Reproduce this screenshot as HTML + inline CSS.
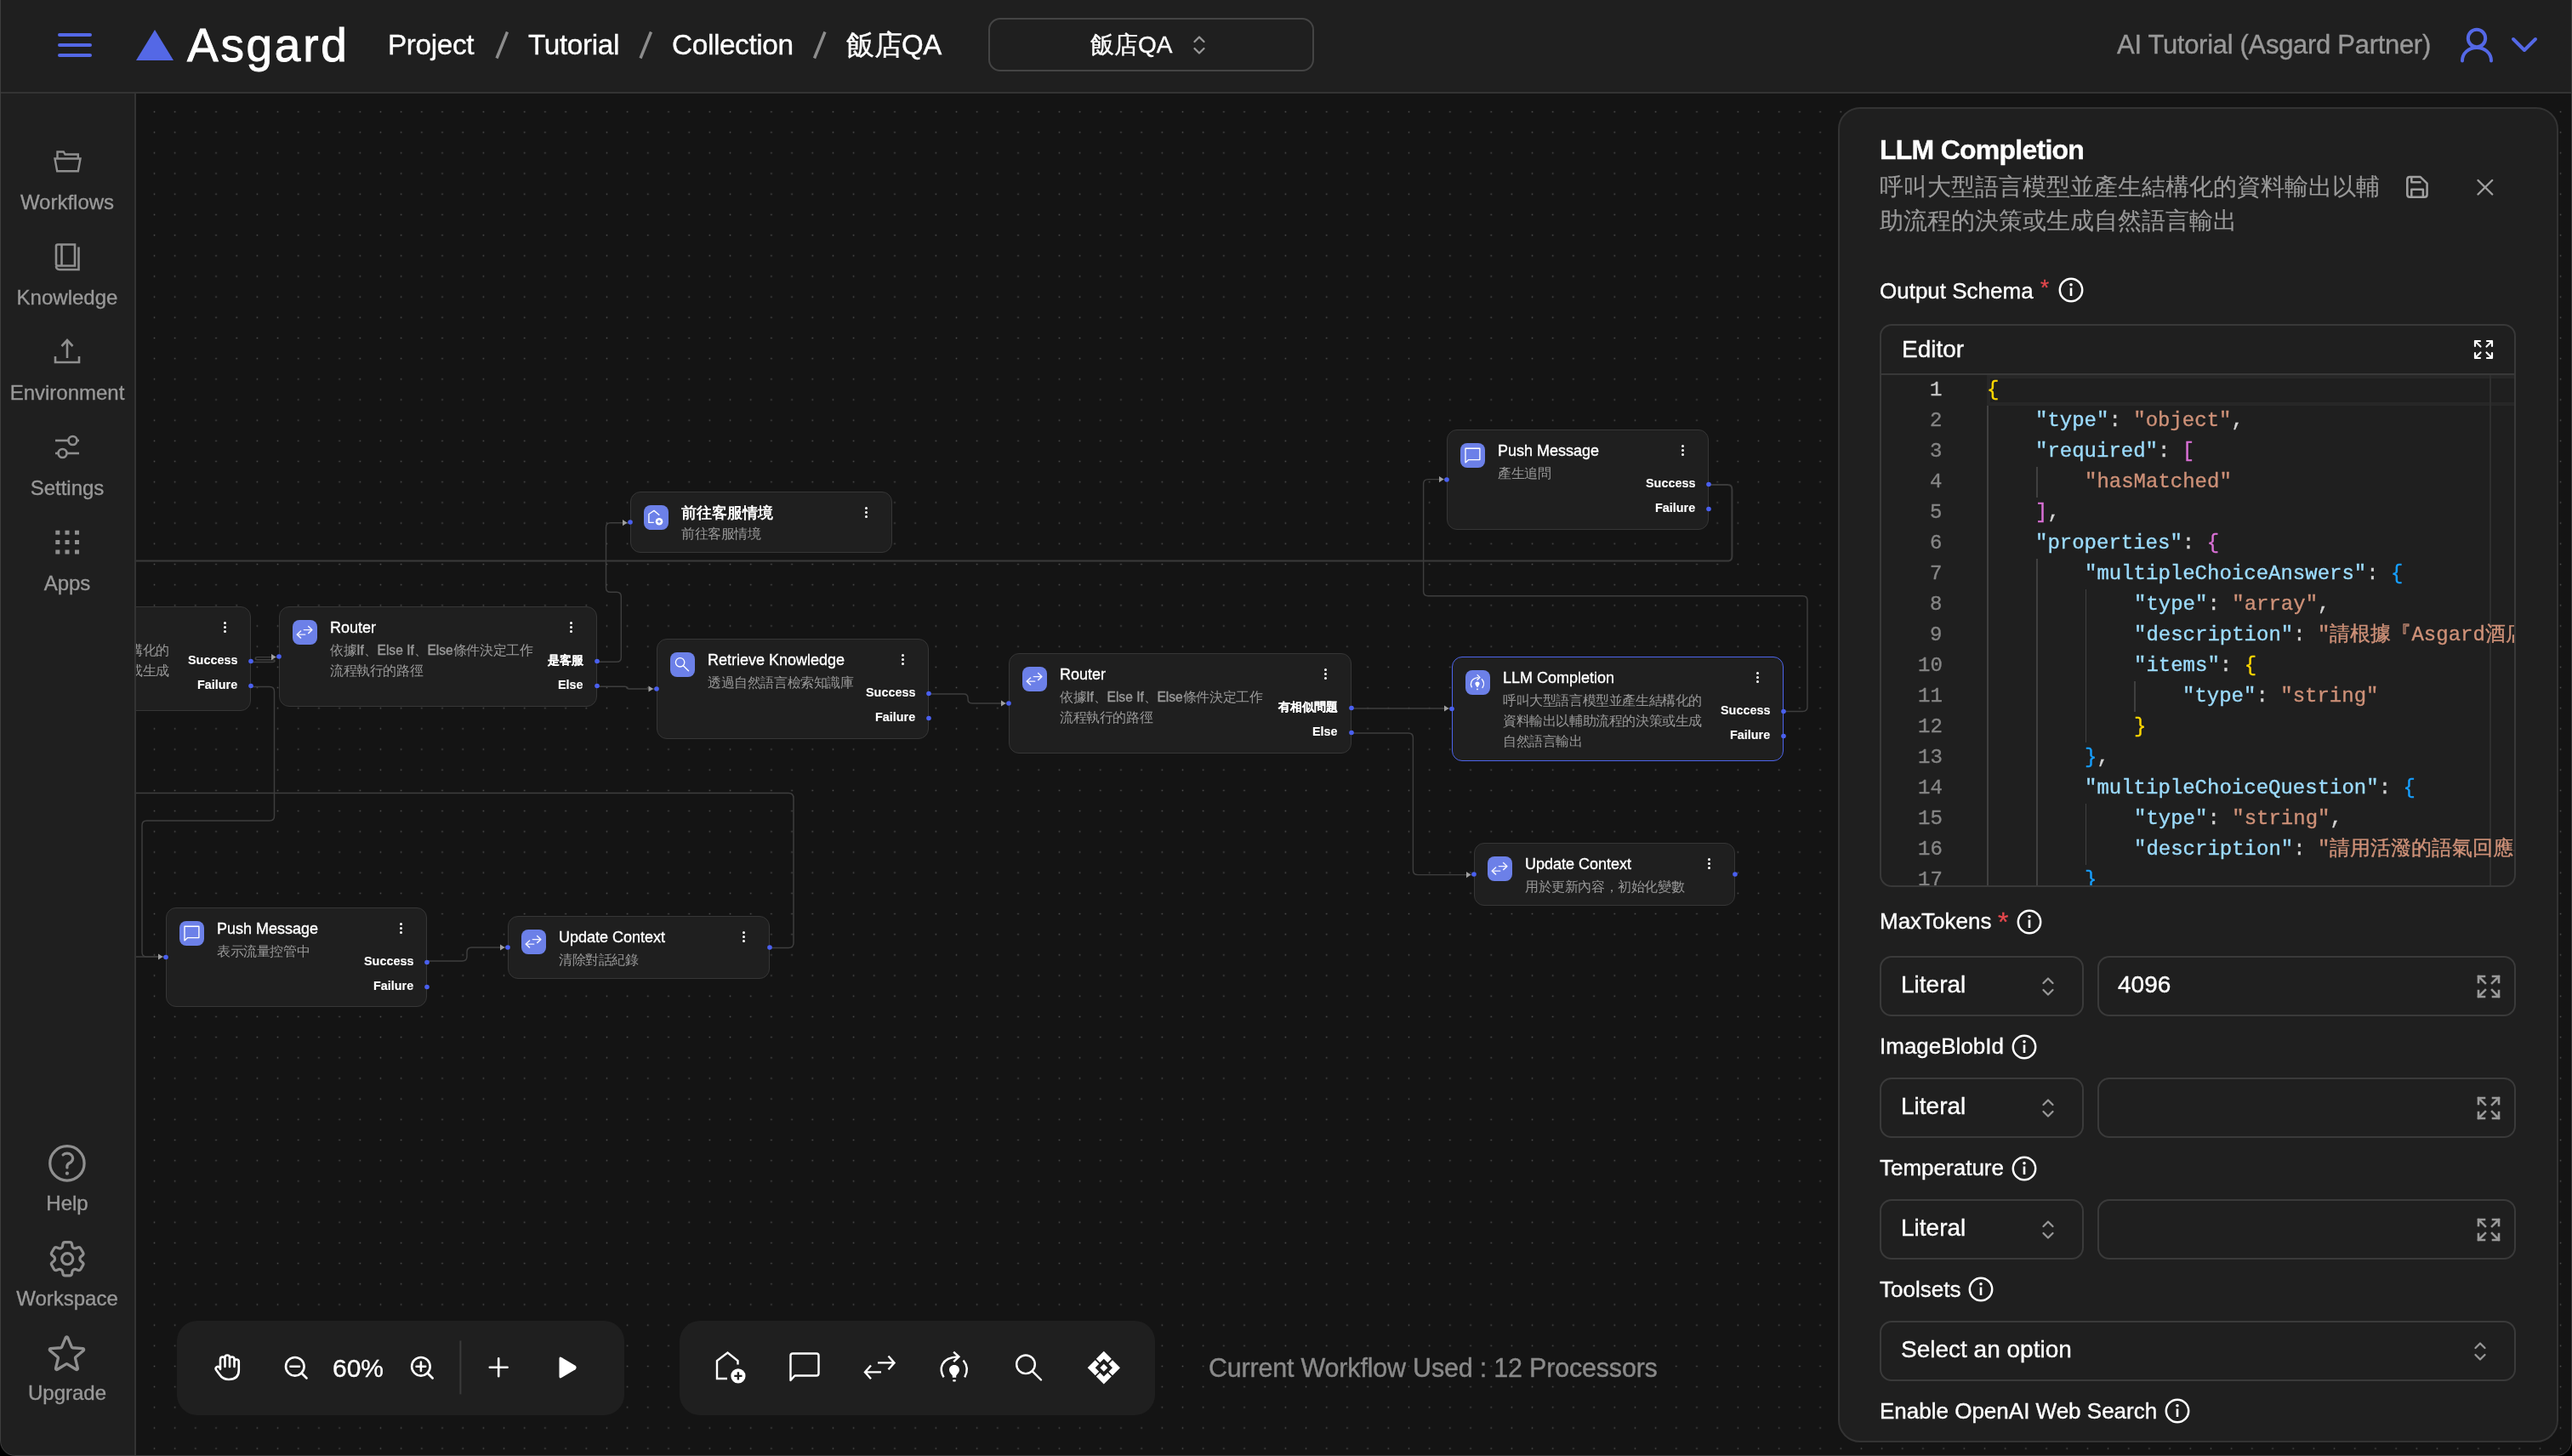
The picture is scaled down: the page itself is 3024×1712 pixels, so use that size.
<!DOCTYPE html>
<html><head><meta charset="utf-8">
<style>
*{box-sizing:border-box;margin:0;padding:0}
html,body{width:3024px;height:1712px;overflow:hidden;background:#000}
body{font-family:"Liberation Sans",sans-serif;color:#fff;position:relative;-webkit-text-stroke:0.35px currentColor}
.abs{position:absolute}
#win{position:absolute;left:0;top:0;width:3024px;height:1712px;background:#141414;border-radius:0 0 18px 18px;overflow:hidden}
#frame{position:absolute;left:0;top:-20px;width:3024px;height:1732px;border:1px solid #3d3d3d;border-radius:0 0 18px 18px;pointer-events:none}
#hdr{position:absolute;left:0;top:0;width:3024px;height:110px;background:#1f1f1f;border-bottom:2px solid #333}
#side{position:absolute;left:0;top:110px;width:160px;height:1602px;background:#1f1f1f;border-right:2px solid #333}
.t{position:absolute;white-space:nowrap;line-height:1}
.navlbl{position:absolute;left:0;width:158px;text-align:center;font-size:24px;color:#999;line-height:1;white-space:nowrap}
.node{position:absolute;background:#1f1f1f;border:1.2px solid #333;border-radius:12px}
.nic{position:absolute;width:29px;height:29px;border-radius:8px;background:#6c80e8}
.nic svg{position:absolute;left:0;top:0}
.ntitle{position:absolute;font-size:18px;color:#fff;white-space:nowrap;line-height:1}
.nsub{position:absolute;font-size:15.6px;color:#999;white-space:nowrap;line-height:24px}
.c{letter-spacing:-0.4px;-webkit-text-stroke:0}
.cj{-webkit-text-stroke:0.1px currentColor}
.nlab{position:absolute;font-size:14.4px;font-weight:bold;color:#fff;white-space:nowrap;line-height:1;-webkit-text-stroke:0.1px #fff}
.menu{position:absolute;width:4px}
.menu i{display:block;width:3.8px;height:3.8px;border-radius:2px;background:#fff;margin-bottom:1.3px}
.tb{position:absolute;top:1553px;height:111px;background:#1f1f1f;border-radius:24px}
#panel{position:absolute;left:2161px;top:126px;width:847px;height:1570px;background:#1f1f1f;border:2px solid #333;border-radius:26px}
.plbl{position:absolute;font-size:26px;color:#fff;white-space:nowrap;line-height:1}
.box{position:absolute;border:2px solid #3a3a3a;border-radius:14px}
.t,.navlbl,.ntitle,.nsub,.nlab,.plbl,.cj,.code{will-change:transform}
</style></head><body>
<div id="win">
  <svg class="abs" style="left:0;top:0" width="3024" height="1712">
    <defs>
      <pattern id="dots" patternUnits="userSpaceOnUse" x="169.41" y="119.41" width="24.18" height="24.18">
        <rect x="11.34" y="11.34" width="1.5" height="1.5" fill="#505050"/>
      </pattern>
    </defs>
    <rect x="160" y="110" width="2864" height="1602" fill="url(#dots)"/>
  </svg>

<svg class="abs" style="left:0;top:0" width="3024" height="1712">
<g fill="none" stroke="#3e3e3e" stroke-width="1.45">
<path d="M295,807.5 H317 Q322.5,807.5 322.5,813 V959.5 Q322.5,965 317,965 H172.5 Q167,965 167,970.5 V1119.5 Q167,1125 172.5,1125 H195"/>
<path d="M160,1125 H195"/>
<path d="M905,1114.5 H927 Q933,1114.5 933,1108.5 V938.5 Q933,932.5 927,932.5 H160"/>
<path d="M502,1130 H543.5 Q549,1130 549,1124.5 V1119.5 Q549,1114 554.5,1114 H597"/>
<path d="M295,778.5 H320.5 Q323,778.5 323,777.1 Q323,775.7 320.5,775.7 H302.5 Q300.3,775.7 300.3,774.2 Q300.3,772.6 302.5,772.6 H328"/>
<path d="M702.7,778.2 H725 Q730.3,778.2 730.3,772.9 V701.6 Q730.3,696.3 725,696.3 H717.8 Q712.5,696.3 712.5,691 V620 Q712.5,614.7 717.8,614.7 H741"/>
<path d="M702.7,807.2 H734.5 Q737,807.2 737,808.6 Q737,810 739.5,810 H771.5"/>
<path d="M1092,816 H1133 Q1138,816 1138,821 V822 Q1138,827 1143,827 H1186"/>
<path d="M1589,833 H1707"/>
<path d="M1589,862 H1656 Q1661.4,862 1661.4,867.5 V1023 Q1661.4,1028.6 1667,1028.6 H1733"/>
<path d="M2097,836.4 H2119.5 Q2125,836.4 2125,831 V706.2 Q2125,700.7 2119.5,700.7 H1679.1 Q1673.6,700.7 1673.6,695.2 V569.1 Q1673.6,563.6 1679.1,563.6 H1701"/>
<path d="M2009,570 H2031 Q2036.4,570 2036.4,575.5 V654.2 Q2036.4,659.6 2031,659.6 H160" stroke-width="2" stroke="#3a3a3a"/>
</g>
<polygon points="186,1121.4 191.5,1125 186,1128.6" fill="#a0a0a0"/>
<polygon points="588,1110.4 593.5,1114 588,1117.6" fill="#a0a0a0"/>
<polygon points="319,769.0 324.5,772.6 319,776.2" fill="#a0a0a0"/>
<polygon points="732,611.1 737.5,614.7 732,618.3000000000001" fill="#a0a0a0"/>
<polygon points="762.5,806.4 768.0,810 762.5,813.6" fill="#a0a0a0"/>
<polygon points="1177,823.4 1182.5,827 1177,830.6" fill="#a0a0a0"/>
<polygon points="1698,829.4 1703.5,833 1698,836.6" fill="#a0a0a0"/>
<polygon points="1724,1025.0 1729.5,1028.6 1724,1032.1999999999998" fill="#a0a0a0"/>
<polygon points="1692,560.0 1697.5,563.6 1692,567.2" fill="#a0a0a0"/>
</svg>
<div class="node" style="left:-95px;top:713px;width:390px;height:123px;border:1.2px solid #363636"></div>
<div class="nic" style="left:-79.5px;top:728.5px"><svg width="29" height="29" viewBox="0 0 29 29"><g fill="none" stroke="#fff" stroke-width="1.3" stroke-linecap="round" stroke-linejoin="round"><path d="M7.3,19.9 C5.5,16.5 5.8,10 14.8,8.7"/><path d="M14,5.6 L17,8.6 L14,11.3"/><path d="M19.3,10.8 C21.8,13.5 22.3,17.5 20,20.5"/></g><path d="M14,13.4 C15.6,13.4 16.6,14.6 16.6,15.8 C16.6,17.2 15.2,18.2 14.6,19.9 H13.4 C12.8,18.2 11.4,17.2 11.4,15.8 C11.4,14.6 12.4,13.4 14,13.4 Z" fill="#fff"/><circle cx="14" cy="22.4" r="0.9" fill="#fff"/></svg></div>
<div class="ntitle" style="left:-35.5px;top:728.8px;">LLM Completion</div>
<div class="nsub" style="left:-35.5px;top:752.5px"><span class="c">呼叫大型語言模型並產生結構化的</span><br><span class="c">資料輸出以輔助流程的決策或生成</span><br><span class="c">自然語言輸出</span></div>
<div class="menu" style="left:262.7px;top:730.5px"><i></i><i></i><i></i></div>
<div class="nlab" style="right:2745px;top:769.0px">Success</div>
<div class="nlab" style="right:2745px;top:798.0px">Failure</div>
<svg class="abs" style="left:0;top:0;overflow:visible" width="1" height="1"><circle cx="-95" cy="774.5" r="2.8" fill="#4a60f0"/><circle cx="295" cy="777.5" r="2.8" fill="#4a60f0"/><circle cx="295" cy="806.5" r="2.8" fill="#4a60f0"/></svg>
<div class="node" style="left:328px;top:713px;width:374px;height:118px;border:1.2px solid #363636"></div>
<div class="nic" style="left:343.5px;top:728.5px"><svg width="29" height="29" viewBox="0 0 29 29"><g fill="none" stroke="#f2f2ff" stroke-width="1.45" stroke-linecap="round" stroke-linejoin="round"><path d="M13.3,11.6 H22.6"/><path d="M18.6,7.5 L22.8,11.6 L18.6,15.6"/><path d="M5.4,17.1 H14.8"/><path d="M9.6,12.9 L5.3,17.1 L9.6,21.1"/></g></svg></div>
<div class="ntitle" style="left:387.5px;top:728.8px;">Router</div>
<div class="nsub" style="left:387.5px;top:752.5px"><span class="c">依據</span>If<span class="c">、</span>Else If<span class="c">、</span>Else<span class="c">條件決定工作</span><br><span class="c">流程執行的路徑</span></div>
<div class="menu" style="left:669.7px;top:730.5px"><i></i><i></i><i></i></div>
<div class="nlab" style="right:2338px;top:769.0px">是客服</div>
<div class="nlab" style="right:2338px;top:798.0px">Else</div>
<svg class="abs" style="left:0;top:0;overflow:visible" width="1" height="1"><circle cx="328" cy="772.0" r="2.8" fill="#4a60f0"/><circle cx="702" cy="777.5" r="2.8" fill="#4a60f0"/><circle cx="702" cy="806.5" r="2.8" fill="#4a60f0"/></svg>
<div class="node" style="left:741px;top:578px;width:308px;height:72px;border:1.2px solid #363636"></div>
<div class="nic" style="left:756.5px;top:593.5px"><svg width="29" height="29" viewBox="0 0 29 29"><g fill="none" stroke="#fff" stroke-width="1.35" stroke-linejoin="miter"><path d="M11.8,20.4 H5.9 V10.5 L12,6.4 L18.3,11.7"/></g><circle cx="18" cy="19.2" r="4.3" fill="#fff"/><path d="M18,17.2 V21.2 M16,19.2 H20" stroke="#6c80e8" stroke-width="1.2"/></svg></div>
<div class="ntitle" style="left:800.5px;top:593.8px;font-weight:bold;-webkit-text-stroke:0;">前往客服情境</div>
<div class="nsub" style="left:800.5px;top:615.7px"><span class="c">前往客服情境</span></div>
<div class="menu" style="left:1016.7px;top:595.5px"><i></i><i></i><i></i></div>
<svg class="abs" style="left:0;top:0;overflow:visible" width="1" height="1"><circle cx="741" cy="614.0" r="2.8" fill="#4a60f0"/></svg>
<div class="node" style="left:772px;top:751px;width:320px;height:118px;border:1.2px solid #363636"></div>
<div class="nic" style="left:787.5px;top:766.5px"><svg width="29" height="29" viewBox="0 0 29 29"><g fill="none" stroke="#fff" stroke-width="1.35" stroke-linecap="round"><circle cx="11.6" cy="11.8" r="5.2"/><path d="M15.6,16 L21.5,21.8"/></g></svg></div>
<div class="ntitle" style="left:831.5px;top:766.8px;">Retrieve Knowledge</div>
<div class="nsub" style="left:831.5px;top:790.5px"><span class="c">透過自然語言檢索知識庫</span></div>
<div class="menu" style="left:1059.7px;top:768.5px"><i></i><i></i><i></i></div>
<div class="nlab" style="right:1948px;top:807.0px">Success</div>
<div class="nlab" style="right:1948px;top:836.0px">Failure</div>
<svg class="abs" style="left:0;top:0;overflow:visible" width="1" height="1"><circle cx="772" cy="810.0" r="2.8" fill="#4a60f0"/><circle cx="1092" cy="815.5" r="2.8" fill="#4a60f0"/><circle cx="1092" cy="844.5" r="2.8" fill="#4a60f0"/></svg>
<div class="node" style="left:1186px;top:768px;width:403px;height:118px;border:1.2px solid #363636"></div>
<div class="nic" style="left:1201.5px;top:783.5px"><svg width="29" height="29" viewBox="0 0 29 29"><g fill="none" stroke="#f2f2ff" stroke-width="1.45" stroke-linecap="round" stroke-linejoin="round"><path d="M13.3,11.6 H22.6"/><path d="M18.6,7.5 L22.8,11.6 L18.6,15.6"/><path d="M5.4,17.1 H14.8"/><path d="M9.6,12.9 L5.3,17.1 L9.6,21.1"/></g></svg></div>
<div class="ntitle" style="left:1245.5px;top:783.8px;">Router</div>
<div class="nsub" style="left:1245.5px;top:807.5px"><span class="c">依據</span>If<span class="c">、</span>Else If<span class="c">、</span>Else<span class="c">條件決定工作</span><br><span class="c">流程執行的路徑</span></div>
<div class="menu" style="left:1556.7px;top:785.5px"><i></i><i></i><i></i></div>
<div class="nlab" style="right:1451px;top:824.0px">有相似問題</div>
<div class="nlab" style="right:1451px;top:853.0px">Else</div>
<svg class="abs" style="left:0;top:0;overflow:visible" width="1" height="1"><circle cx="1186" cy="827.0" r="2.8" fill="#4a60f0"/><circle cx="1589" cy="832.5" r="2.8" fill="#4a60f0"/><circle cx="1589" cy="861.5" r="2.8" fill="#4a60f0"/></svg>
<div class="node" style="left:1701px;top:505px;width:308px;height:118px;border:1.2px solid #363636"></div>
<div class="nic" style="left:1716.5px;top:520.5px"><svg width="29" height="29" viewBox="0 0 29 29"><path d="M6,6.2 H22.9 V19.6 H9.6 L6,22.9 Z" fill="none" stroke="#fff" stroke-width="1.35" stroke-linejoin="round"/></svg></div>
<div class="ntitle" style="left:1760.5px;top:520.8px;">Push Message</div>
<div class="nsub" style="left:1760.5px;top:544.5px"><span class="c">產生追問</span></div>
<div class="menu" style="left:1976.7px;top:522.5px"><i></i><i></i><i></i></div>
<div class="nlab" style="right:1031px;top:561.0px">Success</div>
<div class="nlab" style="right:1031px;top:590.0px">Failure</div>
<svg class="abs" style="left:0;top:0;overflow:visible" width="1" height="1"><circle cx="1701" cy="564.0" r="2.8" fill="#4a60f0"/><circle cx="2009" cy="569.5" r="2.8" fill="#4a60f0"/><circle cx="2009" cy="598.5" r="2.8" fill="#4a60f0"/></svg>
<div class="node" style="left:1707px;top:772px;width:390px;height:123px;border:1.8px solid #4d65ec"></div>
<div class="nic" style="left:1722.5px;top:787.5px"><svg width="29" height="29" viewBox="0 0 29 29"><g fill="none" stroke="#fff" stroke-width="1.3" stroke-linecap="round" stroke-linejoin="round"><path d="M7.3,19.9 C5.5,16.5 5.8,10 14.8,8.7"/><path d="M14,5.6 L17,8.6 L14,11.3"/><path d="M19.3,10.8 C21.8,13.5 22.3,17.5 20,20.5"/></g><path d="M14,13.4 C15.6,13.4 16.6,14.6 16.6,15.8 C16.6,17.2 15.2,18.2 14.6,19.9 H13.4 C12.8,18.2 11.4,17.2 11.4,15.8 C11.4,14.6 12.4,13.4 14,13.4 Z" fill="#fff"/><circle cx="14" cy="22.4" r="0.9" fill="#fff"/></svg></div>
<div class="ntitle" style="left:1766.5px;top:787.8px;">LLM Completion</div>
<div class="nsub" style="left:1766.5px;top:811.5px"><span class="c">呼叫大型語言模型並產生結構化的</span><br><span class="c">資料輸出以輔助流程的決策或生成</span><br><span class="c">自然語言輸出</span></div>
<div class="menu" style="left:2064.7px;top:789.5px"><i></i><i></i><i></i></div>
<div class="nlab" style="right:943px;top:828.0px">Success</div>
<div class="nlab" style="right:943px;top:857.0px">Failure</div>
<svg class="abs" style="left:0;top:0;overflow:visible" width="1" height="1"><circle cx="1707" cy="833.5" r="2.8" fill="#4a60f0"/><circle cx="2097" cy="836.5" r="2.8" fill="#4a60f0"/><circle cx="2097" cy="865.5" r="2.8" fill="#4a60f0"/></svg>
<div class="node" style="left:1733px;top:991px;width:307px;height:74px;border:1.2px solid #363636"></div>
<div class="nic" style="left:1748.5px;top:1006.5px"><svg width="29" height="29" viewBox="0 0 29 29"><g fill="none" stroke="#f2f2ff" stroke-width="1.45" stroke-linecap="round" stroke-linejoin="round"><path d="M13.3,11.6 H22.6"/><path d="M18.6,7.5 L22.8,11.6 L18.6,15.6"/><path d="M5.4,17.1 H14.8"/><path d="M9.6,12.9 L5.3,17.1 L9.6,21.1"/></g></svg></div>
<div class="ntitle" style="left:1792.5px;top:1006.8px;">Update Context</div>
<div class="nsub" style="left:1792.5px;top:1030.5px"><span class="c">用於更新內容，初始化變數</span></div>
<div class="menu" style="left:2007.7px;top:1008.5px"><i></i><i></i><i></i></div>
<svg class="abs" style="left:0;top:0;overflow:visible" width="1" height="1"><circle cx="1733" cy="1028.0" r="2.8" fill="#4a60f0"/><circle cx="2040" cy="1028.0" r="2.8" fill="#4a60f0"/></svg>
<div class="node" style="left:195px;top:1067px;width:307px;height:117px;border:1.2px solid #363636"></div>
<div class="nic" style="left:210.5px;top:1082.5px"><svg width="29" height="29" viewBox="0 0 29 29"><path d="M6,6.2 H22.9 V19.6 H9.6 L6,22.9 Z" fill="none" stroke="#fff" stroke-width="1.35" stroke-linejoin="round"/></svg></div>
<div class="ntitle" style="left:254.5px;top:1082.8px;">Push Message</div>
<div class="nsub" style="left:254.5px;top:1106.5px"><span class="c">表示流量控管中</span></div>
<div class="menu" style="left:469.7px;top:1084.5px"><i></i><i></i><i></i></div>
<div class="nlab" style="right:2538px;top:1123.0px">Success</div>
<div class="nlab" style="right:2538px;top:1152.0px">Failure</div>
<svg class="abs" style="left:0;top:0;overflow:visible" width="1" height="1"><circle cx="195" cy="1125.5" r="2.8" fill="#4a60f0"/><circle cx="502" cy="1131.5" r="2.8" fill="#4a60f0"/><circle cx="502" cy="1160.5" r="2.8" fill="#4a60f0"/></svg>
<div class="node" style="left:597px;top:1077px;width:308px;height:74px;border:1.2px solid #363636"></div>
<div class="nic" style="left:612.5px;top:1092.5px"><svg width="29" height="29" viewBox="0 0 29 29"><g fill="none" stroke="#f2f2ff" stroke-width="1.45" stroke-linecap="round" stroke-linejoin="round"><path d="M13.3,11.6 H22.6"/><path d="M18.6,7.5 L22.8,11.6 L18.6,15.6"/><path d="M5.4,17.1 H14.8"/><path d="M9.6,12.9 L5.3,17.1 L9.6,21.1"/></g></svg></div>
<div class="ntitle" style="left:656.5px;top:1092.8px;">Update Context</div>
<div class="nsub" style="left:656.5px;top:1116.5px"><span class="c">清除對話紀錄</span></div>
<div class="menu" style="left:872.7px;top:1094.5px"><i></i><i></i><i></i></div>
<svg class="abs" style="left:0;top:0;overflow:visible" width="1" height="1"><circle cx="597" cy="1114.0" r="2.8" fill="#4a60f0"/><circle cx="905" cy="1114.0" r="2.8" fill="#4a60f0"/></svg>
  <!-- TOOLBARS -->
  <div class="tb" style="left:208px;width:526px"></div>
  <svg class="abs" style="left:208px;top:1553px" width="526" height="111" viewBox="208 1553 526 111">
    <g fill="none" stroke="#fff" stroke-width="2.6" stroke-linecap="round" stroke-linejoin="round">
      <path d="M259,1610 V1598.5 Q259,1595.5 261.8,1595.5 Q264.5,1595.5 264.5,1598.5 V1607 M264.5,1598 V1596 Q264.5,1593.5 267.2,1593.5 Q270,1593.5 270,1596 V1607 M270,1598 Q270,1595.5 272.7,1595.5 Q275.5,1595.5 275.5,1598 V1607 M275.5,1601 Q275.5,1598.5 278,1598.5 Q280.8,1598.5 280.8,1601 V1611 Q280.8,1622 269,1622 Q262,1622 258,1616 L254,1610.5 Q252.8,1608.5 254.8,1607.3 Q256.8,1606.2 258.5,1608.3 L259,1609"/>
      <circle cx="346.8" cy="1606.8" r="10.8"/><path d="M354.5,1614.5 L360.5,1620.5"/><path d="M341.5,1606.8 H352"/>
      <circle cx="494.9" cy="1606.8" r="10.8"/><path d="M502.6,1614.5 L508.6,1620.5"/><path d="M489.6,1606.8 H500.2 M494.9,1601.5 V1612"/>
      <path d="M575.8,1607.8 H596.6 M586.2,1597.3 V1618.3"/>
    </g>
    <path d="M657.5,1597.5 Q657.5,1594.5 660.5,1596.2 L676.5,1605.8 Q678.8,1608 676.5,1610.2 L660.5,1619.8 Q657.5,1621.5 657.5,1618.5 Z" fill="#fff"/>
    <rect x="540.4" y="1576.4" width="2" height="63" fill="#3a3a3a"/>
  </svg>
  <div class="t" style="left:391px;top:1593.6px;font-size:30px;color:#fff">60%</div>

  <div class="tb" style="left:799px;width:559px"></div>
  <svg class="abs" style="left:799px;top:1553px" width="559" height="111" viewBox="799 1553 559 111">
    <g fill="none" stroke="#fff" stroke-width="2.4" stroke-linecap="round" stroke-linejoin="miter">
      <path d="M855,1621 H843 V1600 L855.5,1590.5 L867.5,1600 V1604.5" stroke-linecap="butt"/>
      <path d="M932,1591.5 H960 Q962.5,1591.5 962.5,1594 V1615 Q962.5,1617.5 960,1617.5 H934.5 L929.5,1623 V1594 Q929.5,1591.5 932,1591.5 Z" stroke-linejoin="round"/>
      <path d="M1032,1602.4 H1050.5 M1044.5,1594.5 L1051.5,1602.4 L1044.5,1610.2" stroke-linecap="butt"/>
      <path d="M1036,1613.4 H1017.5 M1024,1605.5 L1017,1613.4 L1024,1621.3" stroke-linecap="butt"/>
      <path d="M1109.6,1619.3 C1104,1610 1105.5,1596.5 1126.5,1595.3" stroke-linecap="butt"/>
      <path d="M1121.2,1589.6 L1127.4,1595.3 L1121.2,1601.2" stroke-linecap="butt"/>
      <path d="M1132.6,1599.6 C1137.8,1606 1137.8,1613 1134.2,1619.3" stroke-linecap="butt"/>
      <circle cx="1206" cy="1604.3" r="10.8"/><path d="M1213.8,1612.3 L1224,1622.5"/>
    </g>
    <circle cx="867.9" cy="1617.9" r="8.6" fill="#fff"/>
    <path d="M867.9,1613.3 V1622.5 M863.3,1617.9 H872.5" stroke="#1f1f1f" stroke-width="2.4"/>
    <path d="M1122,1604.9 C1125.5,1604.9 1128,1607.5 1128,1610.8 C1128,1613.5 1126,1615 1124.2,1617.5 V1619.7 H1119.8 V1617.5 C1118,1615 1116,1613.5 1116,1610.8 C1116,1607.5 1118.5,1604.9 1122,1604.9 Z" fill="#fff"/>
    <rect x="1120.2" y="1622.2" width="3.6" height="2.4" rx="0.8" fill="#fff"/>
    <g fill="#fff">
      <path d="M1297.8,1588.7 L1306.8,1597.7 L1302.3,1602.2 L1297.8,1597.7 L1293.3,1602.2 L1288.8,1597.7 Z"/>
      <path d="M1297.8,1627.6 L1306.8,1618.6 L1302.3,1614.1 L1297.8,1618.6 L1293.3,1614.1 L1288.8,1618.6 Z"/>
      <path d="M1278.7,1608.2 L1287.7,1599.2 L1292.2,1603.7 L1287.7,1608.2 L1292.2,1612.7 L1287.7,1617.2 Z"/>
      <path d="M1317,1608.2 L1308,1599.2 L1303.5,1603.7 L1308,1608.2 L1303.5,1612.7 L1308,1617.2 Z"/>
      <path d="M1297.8,1603.7 L1302.3,1608.2 L1297.8,1612.7 L1293.3,1608.2 Z"/>
    </g>
  </svg>
  <div class="t" style="left:1420.5px;top:1592.9px;font-size:30.5px;letter-spacing:-0.2px;color:#8a8a8a">Current Workflow Used : 12 Processors</div>

  <!-- RIGHT PANEL -->
  <div id="panel"></div>
  <div class="t" style="left:2210px;top:159.6px;font-size:32px;letter-spacing:-0.75px;font-weight:bold;color:#fff">LLM Completion</div>
  <div class="abs cj" style="left:2210px;top:200px;font-size:28px;line-height:39.5px;color:#999;white-space:nowrap">呼叫大型語言模型並產生結構化的資料輸出以輔<br>助流程的決策或生成自然語言輸出</div>
  <svg class="abs" style="left:2824px;top:204px" width="36" height="32" viewBox="0 0 36 32"><g fill="none" stroke="#a0a0a0" stroke-width="2.5" stroke-linejoin="round"><path d="M9.3,4.1 H21.8 L29.6,11.6 V24.7 Q29.6,27.7 26.6,27.7 H9.3 Q6.3,27.7 6.3,24.7 V7.1 Q6.3,4.1 9.3,4.1 Z"/><path d="M11.3,4.1 V10.2 H22.5"/><path d="M11.3,27.7 V18.8 H24.9 V27.7"/></g></svg>
  <svg class="abs" style="left:2906px;top:205px" width="31" height="31" viewBox="0 0 31 31"><g stroke="#a0a0a0" stroke-width="2.4" stroke-linecap="round"><line x1="7.5" y1="7" x2="24.2" y2="23.5"/><line x1="24.2" y1="7" x2="7.5" y2="23.5"/></g></svg>

  <div class="plbl" style="left:2210px;top:328.6px">Output Schema</div>
  <div class="t" style="left:2399px;top:325px;font-size:26px;color:#e5484d">*</div>
  <svg class="abs" style="left:2418px;top:324px" width="34" height="34" viewBox="0 0 34 34"><circle cx="17" cy="17" r="13.2" fill="none" stroke="#fff" stroke-width="2.5"/><circle cx="17" cy="10.8" r="1.8" fill="#fff"/><rect x="15.7" y="14.5" width="2.6" height="9.5" fill="#fff"/></svg>

  <div class="box" style="left:2210px;top:381px;width:748px;height:662px;border-color:#383838"></div>
  <div class="abs" style="left:2212px;top:439px;width:744px;height:2px;background:#383838"></div>
  <div class="t" style="left:2236px;top:396.7px;font-size:28px;color:#fff">Editor</div>
  <svg class="abs" style="left:2906px;top:397px" width="28" height="28" viewBox="0 0 28 28"><g fill="none" stroke="#fff" stroke-width="2.2" stroke-linecap="round" stroke-linejoin="round"><path d="M4,10 V4 H10 M4,4 L10.5,10.5"/><path d="M18,4 H24 V10 M24,4 L17.5,10.5"/><path d="M4,18 V24 H10 M4,24 L10.5,17.5"/><path d="M18,24 H24 V18 M24,24 L17.5,17.5"/></g></svg>
<div class="abs" style="left:2212px;top:441px;width:744px;height:600px;overflow:hidden;border-radius:0 0 12px 12px">
<div class="abs" style="left:124px;top:0.4px;width:624px;height:35.3px;border:4px solid #272727;border-right:none"></div>
<div class="abs" style="left:124.4px;top:35.5px;width:1.5px;height:576px;background:#404040"></div>
<div class="abs" style="left:182.0px;top:107.5px;width:1.5px;height:36px;background:#404040"></div>
<div class="abs" style="left:182.0px;top:215.5px;width:1.5px;height:396px;background:#404040"></div>
<div class="abs" style="left:239.6px;top:251.5px;width:1.5px;height:180px;background:#404040"></div>
<div class="abs" style="left:239.6px;top:503.5px;width:1.5px;height:72px;background:#404040"></div>
<div class="abs" style="left:297.2px;top:359.5px;width:1.5px;height:36px;background:#404040"></div>
<div class="abs" style="left:715px;top:0;width:1.5px;height:600px;background:#2e2e2e"></div>
<div class="abs code" style="right:672.5px;top:-0.5px;height:36px;line-height:36px;font-family:'Liberation Mono',monospace;font-size:24px;color:#c6c6c6;text-align:right">1</div>
<div class="abs code" style="left:123.8px;top:-0.5px;height:36px;line-height:36px;font-family:'Liberation Mono',monospace;font-size:24px;white-space:pre"><span style="color:#ffd700">{</span></div>
<div class="abs code" style="right:672.5px;top:35.5px;height:36px;line-height:36px;font-family:'Liberation Mono',monospace;font-size:24px;color:#858585;text-align:right">2</div>
<div class="abs code" style="left:181.4px;top:35.5px;height:36px;line-height:36px;font-family:'Liberation Mono',monospace;font-size:24px;white-space:pre"><span style="color:#9cdcfe">"type"</span><span style="color:#d4d4d4">: </span><span style="color:#ce9178">"object"</span><span style="color:#d4d4d4">,</span></div>
<div class="abs code" style="right:672.5px;top:71.5px;height:36px;line-height:36px;font-family:'Liberation Mono',monospace;font-size:24px;color:#858585;text-align:right">3</div>
<div class="abs code" style="left:181.4px;top:71.5px;height:36px;line-height:36px;font-family:'Liberation Mono',monospace;font-size:24px;white-space:pre"><span style="color:#9cdcfe">"required"</span><span style="color:#d4d4d4">: </span><span style="color:#da70d6">[</span></div>
<div class="abs code" style="right:672.5px;top:107.5px;height:36px;line-height:36px;font-family:'Liberation Mono',monospace;font-size:24px;color:#858585;text-align:right">4</div>
<div class="abs code" style="left:239.0px;top:107.5px;height:36px;line-height:36px;font-family:'Liberation Mono',monospace;font-size:24px;white-space:pre"><span style="color:#ce9178">"hasMatched"</span></div>
<div class="abs code" style="right:672.5px;top:143.5px;height:36px;line-height:36px;font-family:'Liberation Mono',monospace;font-size:24px;color:#858585;text-align:right">5</div>
<div class="abs code" style="left:181.4px;top:143.5px;height:36px;line-height:36px;font-family:'Liberation Mono',monospace;font-size:24px;white-space:pre"><span style="color:#da70d6">]</span><span style="color:#d4d4d4">,</span></div>
<div class="abs code" style="right:672.5px;top:179.5px;height:36px;line-height:36px;font-family:'Liberation Mono',monospace;font-size:24px;color:#858585;text-align:right">6</div>
<div class="abs code" style="left:181.4px;top:179.5px;height:36px;line-height:36px;font-family:'Liberation Mono',monospace;font-size:24px;white-space:pre"><span style="color:#9cdcfe">"properties"</span><span style="color:#d4d4d4">: </span><span style="color:#da70d6">{</span></div>
<div class="abs code" style="right:672.5px;top:215.5px;height:36px;line-height:36px;font-family:'Liberation Mono',monospace;font-size:24px;color:#858585;text-align:right">7</div>
<div class="abs code" style="left:239.0px;top:215.5px;height:36px;line-height:36px;font-family:'Liberation Mono',monospace;font-size:24px;white-space:pre"><span style="color:#9cdcfe">"multipleChoiceAnswers"</span><span style="color:#d4d4d4">: </span><span style="color:#179fff">{</span></div>
<div class="abs code" style="right:672.5px;top:251.5px;height:36px;line-height:36px;font-family:'Liberation Mono',monospace;font-size:24px;color:#858585;text-align:right">8</div>
<div class="abs code" style="left:296.6px;top:251.5px;height:36px;line-height:36px;font-family:'Liberation Mono',monospace;font-size:24px;white-space:pre"><span style="color:#9cdcfe">"type"</span><span style="color:#d4d4d4">: </span><span style="color:#ce9178">"array"</span><span style="color:#d4d4d4">,</span></div>
<div class="abs code" style="right:672.5px;top:287.5px;height:36px;line-height:36px;font-family:'Liberation Mono',monospace;font-size:24px;color:#858585;text-align:right">9</div>
<div class="abs code" style="left:296.6px;top:287.5px;height:36px;line-height:36px;font-family:'Liberation Mono',monospace;font-size:24px;white-space:pre"><span style="color:#9cdcfe">"description"</span><span style="color:#d4d4d4">: </span><span style="color:#ce9178">"請根據『Asgard酒店的資料</span></div>
<div class="abs code" style="right:672.5px;top:323.5px;height:36px;line-height:36px;font-family:'Liberation Mono',monospace;font-size:24px;color:#858585;text-align:right">10</div>
<div class="abs code" style="left:296.6px;top:323.5px;height:36px;line-height:36px;font-family:'Liberation Mono',monospace;font-size:24px;white-space:pre"><span style="color:#9cdcfe">"items"</span><span style="color:#d4d4d4">: </span><span style="color:#ffd700">{</span></div>
<div class="abs code" style="right:672.5px;top:359.5px;height:36px;line-height:36px;font-family:'Liberation Mono',monospace;font-size:24px;color:#858585;text-align:right">11</div>
<div class="abs code" style="left:354.2px;top:359.5px;height:36px;line-height:36px;font-family:'Liberation Mono',monospace;font-size:24px;white-space:pre"><span style="color:#9cdcfe">"type"</span><span style="color:#d4d4d4">: </span><span style="color:#ce9178">"string"</span></div>
<div class="abs code" style="right:672.5px;top:395.5px;height:36px;line-height:36px;font-family:'Liberation Mono',monospace;font-size:24px;color:#858585;text-align:right">12</div>
<div class="abs code" style="left:296.6px;top:395.5px;height:36px;line-height:36px;font-family:'Liberation Mono',monospace;font-size:24px;white-space:pre"><span style="color:#ffd700">}</span></div>
<div class="abs code" style="right:672.5px;top:431.5px;height:36px;line-height:36px;font-family:'Liberation Mono',monospace;font-size:24px;color:#858585;text-align:right">13</div>
<div class="abs code" style="left:239.0px;top:431.5px;height:36px;line-height:36px;font-family:'Liberation Mono',monospace;font-size:24px;white-space:pre"><span style="color:#179fff">}</span><span style="color:#d4d4d4">,</span></div>
<div class="abs code" style="right:672.5px;top:467.5px;height:36px;line-height:36px;font-family:'Liberation Mono',monospace;font-size:24px;color:#858585;text-align:right">14</div>
<div class="abs code" style="left:239.0px;top:467.5px;height:36px;line-height:36px;font-family:'Liberation Mono',monospace;font-size:24px;white-space:pre"><span style="color:#9cdcfe">"multipleChoiceQuestion"</span><span style="color:#d4d4d4">: </span><span style="color:#179fff">{</span></div>
<div class="abs code" style="right:672.5px;top:503.5px;height:36px;line-height:36px;font-family:'Liberation Mono',monospace;font-size:24px;color:#858585;text-align:right">15</div>
<div class="abs code" style="left:296.6px;top:503.5px;height:36px;line-height:36px;font-family:'Liberation Mono',monospace;font-size:24px;white-space:pre"><span style="color:#9cdcfe">"type"</span><span style="color:#d4d4d4">: </span><span style="color:#ce9178">"string"</span><span style="color:#d4d4d4">,</span></div>
<div class="abs code" style="right:672.5px;top:539.5px;height:36px;line-height:36px;font-family:'Liberation Mono',monospace;font-size:24px;color:#858585;text-align:right">16</div>
<div class="abs code" style="left:296.6px;top:539.5px;height:36px;line-height:36px;font-family:'Liberation Mono',monospace;font-size:24px;white-space:pre"><span style="color:#9cdcfe">"description"</span><span style="color:#d4d4d4">: </span><span style="color:#ce9178">"請用活潑的語氣回應客人</span></div>
<div class="abs code" style="right:672.5px;top:575.5px;height:36px;line-height:36px;font-family:'Liberation Mono',monospace;font-size:24px;color:#858585;text-align:right">17</div>
<div class="abs code" style="left:239.0px;top:575.5px;height:36px;line-height:36px;font-family:'Liberation Mono',monospace;font-size:24px;white-space:pre"><span style="color:#179fff">}</span></div>
</div>
<div class="plbl" style="left:2210px;top:1070.0px">MaxTokens</div>
<div class="t" style="left:2349px;top:1067.5px;font-size:32px;color:#e5484d">*</div>
<svg class="abs" style="left:2369px;top:1066.5px" width="34" height="34" viewBox="0 0 34 34"><circle cx="17" cy="17" r="13.2" fill="none" stroke="#fff" stroke-width="2.5"/><circle cx="17" cy="10.8" r="1.8" fill="#fff"/><rect x="15.7" y="14.5" width="2.6" height="9.5" fill="#fff"/></svg>
<div class="box" style="left:2210px;top:1123.5px;width:240px;height:71px"></div>
<div class="t" style="left:2235px;top:1144.1px;font-size:28px;color:#fff">Literal</div>
<svg class="abs" style="left:2400px;top:1149.0px" width="16" height="22" viewBox="0 0 16 22"><g fill="none" stroke="#999" stroke-width="2.2" stroke-linecap="round" stroke-linejoin="round"><polyline points="2.5,7 8,1.5 13.5,7"/><polyline points="2.5,15 8,20.5 13.5,15"/></g></svg>
<div class="box" style="left:2466px;top:1123.5px;width:492px;height:71px"></div>
<div class="t" style="left:2490px;top:1144.1px;font-size:28px;color:#fff">4096</div>
<svg class="abs" style="left:2911px;top:1145.0px" width="30" height="30" viewBox="0 0 30 30"><g fill="none" stroke="#999" stroke-width="2.6" stroke-linecap="square"><path d="M3,10 V3 H10 M3,3 L11,11"/><path d="M20,3 H27 V10 M27,3 L19,11"/><path d="M3,20 V27 H10 M3,27 L11,19"/><path d="M20,27 H27 V20 M27,27 L19,19"/></g></svg>
<div class="plbl" style="left:2210px;top:1217.0px">ImageBlobId</div>
<svg class="abs" style="left:2363px;top:1213.5px" width="34" height="34" viewBox="0 0 34 34"><circle cx="17" cy="17" r="13.2" fill="none" stroke="#fff" stroke-width="2.5"/><circle cx="17" cy="10.8" r="1.8" fill="#fff"/><rect x="15.7" y="14.5" width="2.6" height="9.5" fill="#fff"/></svg>
<div class="box" style="left:2210px;top:1266.7px;width:240px;height:71px"></div>
<div class="t" style="left:2235px;top:1287.3px;font-size:28px;color:#fff">Literal</div>
<svg class="abs" style="left:2400px;top:1292.2px" width="16" height="22" viewBox="0 0 16 22"><g fill="none" stroke="#999" stroke-width="2.2" stroke-linecap="round" stroke-linejoin="round"><polyline points="2.5,7 8,1.5 13.5,7"/><polyline points="2.5,15 8,20.5 13.5,15"/></g></svg>
<div class="box" style="left:2466px;top:1266.7px;width:492px;height:71px"></div>
<svg class="abs" style="left:2911px;top:1288.2px" width="30" height="30" viewBox="0 0 30 30"><g fill="none" stroke="#999" stroke-width="2.6" stroke-linecap="square"><path d="M3,10 V3 H10 M3,3 L11,11"/><path d="M20,3 H27 V10 M27,3 L19,11"/><path d="M3,20 V27 H10 M3,27 L11,19"/><path d="M20,27 H27 V20 M27,27 L19,19"/></g></svg>
<div class="plbl" style="left:2210px;top:1360.0px">Temperature</div>
<svg class="abs" style="left:2363px;top:1356.5px" width="34" height="34" viewBox="0 0 34 34"><circle cx="17" cy="17" r="13.2" fill="none" stroke="#fff" stroke-width="2.5"/><circle cx="17" cy="10.8" r="1.8" fill="#fff"/><rect x="15.7" y="14.5" width="2.6" height="9.5" fill="#fff"/></svg>
<div class="box" style="left:2210px;top:1409.8px;width:240px;height:71px"></div>
<div class="t" style="left:2235px;top:1430.4px;font-size:28px;color:#fff">Literal</div>
<svg class="abs" style="left:2400px;top:1435.3px" width="16" height="22" viewBox="0 0 16 22"><g fill="none" stroke="#999" stroke-width="2.2" stroke-linecap="round" stroke-linejoin="round"><polyline points="2.5,7 8,1.5 13.5,7"/><polyline points="2.5,15 8,20.5 13.5,15"/></g></svg>
<div class="box" style="left:2466px;top:1409.8px;width:492px;height:71px"></div>
<svg class="abs" style="left:2911px;top:1431.3px" width="30" height="30" viewBox="0 0 30 30"><g fill="none" stroke="#999" stroke-width="2.6" stroke-linecap="square"><path d="M3,10 V3 H10 M3,3 L11,11"/><path d="M20,3 H27 V10 M27,3 L19,11"/><path d="M3,20 V27 H10 M3,27 L11,19"/><path d="M20,27 H27 V20 M27,27 L19,19"/></g></svg>
<div class="plbl" style="left:2210px;top:1502.6px">Toolsets</div>
<svg class="abs" style="left:2312px;top:1499.1px" width="34" height="34" viewBox="0 0 34 34"><circle cx="17" cy="17" r="13.2" fill="none" stroke="#fff" stroke-width="2.5"/><circle cx="17" cy="10.8" r="1.8" fill="#fff"/><rect x="15.7" y="14.5" width="2.6" height="9.5" fill="#fff"/></svg>
<div class="box" style="left:2210px;top:1552.7px;width:748px;height:71px"></div>
<div class="t" style="left:2235px;top:1573.3px;font-size:28px;color:#fff">Select an option</div>
<svg class="abs" style="left:2908px;top:1578px" width="16" height="22" viewBox="0 0 16 22"><g fill="none" stroke="#999" stroke-width="2.2" stroke-linecap="round" stroke-linejoin="round"><polyline points="2.5,7 8,1.5 13.5,7"/><polyline points="2.5,15 8,20.5 13.5,15"/></g></svg>
<div class="plbl" style="left:2210px;top:1645.7px">Enable OpenAI Web Search</div>
<svg class="abs" style="left:2543px;top:1642.2px" width="34" height="34" viewBox="0 0 34 34"><circle cx="17" cy="17" r="13.2" fill="none" stroke="#fff" stroke-width="2.5"/><circle cx="17" cy="10.8" r="1.8" fill="#fff"/><rect x="15.7" y="14.5" width="2.6" height="9.5" fill="#fff"/></svg>
  <!-- HEADER -->
  <div id="hdr">
    <svg class="abs" style="left:66px;top:37px" width="44" height="32" viewBox="0 0 44 32">
      <g stroke="#5468e6" stroke-width="4" stroke-linecap="round"><line x1="4" y1="4" x2="40" y2="4"/><line x1="4" y1="16" x2="40" y2="16"/><line x1="4" y1="28" x2="40" y2="28"/></g>
    </svg>
    <svg class="abs" style="left:160px;top:35px" width="44" height="36" viewBox="0 0 44 36"><polygon points="22,0 44,36 0,36" fill="#5468e6"/></svg>
    <div class="t" style="left:220px;top:26.3px;font-size:55px;letter-spacing:2.7px;color:#fff;-webkit-text-stroke:0.9px #fff">Asgard</div>
    <div class="t" style="left:456.4px;top:35.8px;font-size:33.4px;letter-spacing:-0.4px;color:#fff">Project</div>
    
    <svg class="abs" style="left:0;top:0" width="1000" height="100"><g stroke="#8c8c8c" stroke-width="3.4"><line x1="584" y1="68.5" x2="596.5" y2="37.5"/><line x1="753" y1="68.5" x2="765.5" y2="37.5"/><line x1="957.5" y1="68.5" x2="970" y2="37.5"/></g></svg>
    <div class="t" style="left:621px;top:35.8px;font-size:33.4px;letter-spacing:-0.4px;color:#fff">Tutorial</div>
    
    <div class="t" style="left:790px;top:35.8px;font-size:33.4px;letter-spacing:-0.4px;color:#fff">Collection</div>
    
    <div class="t" style="left:995px;top:35.8px;font-size:33px;letter-spacing:-0.5px;color:#fff">飯店QA</div>
    <div class="abs" style="left:1162px;top:21px;width:383px;height:63px;border:2px solid #444;border-radius:14px"></div>
    <div class="t" style="left:1282px;top:39.3px;font-size:28px;color:#fff">飯店QA</div>
    <svg class="abs" style="left:1402px;top:42px" width="16" height="22" viewBox="0 0 16 22"><g fill="none" stroke="#999" stroke-width="2.2" stroke-linecap="round" stroke-linejoin="round"><polyline points="2.5,7 8,1.5 13.5,7"/><polyline points="2.5,15 8,20.5 13.5,15"/></g></svg>
    <div class="t" style="left:2488.5px;top:37.4px;font-size:31px;letter-spacing:-0.3px;color:#999">AI Tutorial (Asgard Partner)</div>
    <svg class="abs" style="left:2890px;top:30px" width="44" height="46" viewBox="0 0 44 46"><g fill="none" stroke="#5468e6" stroke-width="4" stroke-linecap="round"><circle cx="22" cy="15" r="10.2"/><path d="M5,41.5 C5,32.5 12.5,26 22,26 C31.5,26 39,32.5 39,41.5"/></g></svg>
    <svg class="abs" style="left:2952px;top:43px" width="32" height="20" viewBox="0 0 32 20"><polyline points="3,3 16,16 29,3" fill="none" stroke="#5468e6" stroke-width="4" stroke-linecap="round" stroke-linejoin="round"/></svg>
  </div>

  <!-- SIDEBAR -->
  <div id="side">
    <svg class="abs" style="left:60px;top:62px" width="38" height="32" viewBox="0 0 38 32"><g fill="none" stroke="#8f8f8f" stroke-width="2.4" stroke-linejoin="miter"><path d="M7.5,14.5 V6.5 H14.8 L16.5,9.5 H31.8 V14.5"/><path d="M4.5,14.5 H34.5 L31.8,29.2 H7.2 Z"/></g></svg>
    <div class="navlbl" style="top:116.2px">Workflows</div>
    <svg class="abs" style="left:61.2px;top:173.5px" width="38" height="36" viewBox="0 0 38 36"><g fill="none" stroke="#8f8f8f" stroke-width="2.6"><path d="M7,3.5 H27 V28.5 H7 C5,28.5 5,26.5 5,26.5 V5.5 C5,3.5 7,3.5 7,3.5 Z"/><line x1="11.5" y1="3.5" x2="11.5" y2="28.5"/><path d="M31.5,6.5 V33 H9 C6,33 5,31 5,29"/></g></svg>
    <div class="navlbl" style="top:228.2px">Knowledge</div>
    <svg class="abs" style="left:60px;top:286px" width="38" height="34" viewBox="0 0 38 34"><g fill="none" stroke="#8f8f8f" stroke-width="2.6"><path d="M5,23 V30 H33 V23"/><line x1="19" y1="4" x2="19" y2="25"/><polyline points="12.5,11 19,4 25.5,11"/></g></svg>
    <div class="navlbl" style="top:340.2px">Environment</div>
    <svg class="abs" style="left:60px;top:398px" width="38" height="34" viewBox="0 0 38 34"><g fill="none" stroke="#8f8f8f" stroke-width="2.6"><line x1="5" y1="10" x2="20" y2="10"/><line x1="31" y1="10" x2="33" y2="10"/><circle cx="25.5" cy="10" r="5"/><line x1="5" y1="25" x2="8" y2="25"/><line x1="19" y1="25" x2="33" y2="25"/><circle cx="13.5" cy="25" r="5"/></g></svg>
    <div class="navlbl" style="top:452.2px">Settings</div>
    <svg class="abs" style="left:60px;top:510px" width="38" height="34" viewBox="0 0 38 34"><g fill="#8f8f8f"><rect x="5.3" y="3.7" width="5" height="5"/><rect x="16.5" y="3.7" width="5" height="5"/><rect x="28" y="3.7" width="5" height="5"/><rect x="5.3" y="15" width="5" height="5"/><rect x="16.5" y="15" width="5" height="5"/><rect x="28" y="15" width="5" height="5"/><rect x="5.3" y="26.5" width="5" height="5"/><rect x="16.5" y="26.5" width="5" height="5"/><rect x="28" y="26.5" width="5" height="5"/></g></svg>
    <div class="navlbl" style="top:564.2px">Apps</div>

    <svg class="abs" style="left:52px;top:1231px" width="53.8" height="53.8" viewBox="0 0 24 24"><path d="M9.879 7.519c1.171-1.025 3.071-1.025 4.242 0 1.172 1.025 1.172 2.687 0 3.712-.203.179-.43.326-.67.442-.745.361-1.45.999-1.45 1.827v.75M21 12a9 9 0 1 1-18 0 9 9 0 0 1 18 0Z" fill="none" stroke="#8f8f8f" stroke-width="1.45" stroke-linecap="round" stroke-linejoin="round"/><circle cx="12" cy="17.25" r="0.95" fill="#8f8f8f"/></svg>
    <div class="navlbl" style="top:1293.2px">Help</div>
    <svg class="abs" style="left:52.6px;top:1343.5px" width="52.4" height="52.4" viewBox="0 0 24 24"><g fill="none" stroke="#8f8f8f" stroke-width="1.45" stroke-linecap="round" stroke-linejoin="round"><path d="M9.594 3.94c.09-.542.56-.94 1.11-.94h2.593c.55 0 1.02.398 1.11.94l.213 1.281c.063.374.313.686.645.87.074.04.147.083.22.127.325.196.72.257 1.075.124l1.217-.456a1.125 1.125 0 0 1 1.37.49l1.296 2.247a1.125 1.125 0 0 1-.26 1.431l-1.003.827c-.293.241-.438.613-.43.992a7.723 7.723 0 0 1 0 .255c-.008.378.137.75.43.991l1.004.827c.424.35.534.955.26 1.43l-1.298 2.247a1.125 1.125 0 0 1-1.369.491l-1.217-.456c-.355-.133-.75-.072-1.076.124a6.47 6.47 0 0 1-.22.128c-.331.183-.581.495-.644.869l-.213 1.281c-.09.543-.56.94-1.11.94h-2.594c-.55 0-1.019-.398-1.11-.94l-.213-1.281c-.062-.374-.312-.686-.644-.87a6.52 6.52 0 0 1-.22-.127c-.325-.196-.72-.257-1.076-.124l-1.217.456a1.125 1.125 0 0 1-1.369-.49l-1.297-2.247a1.125 1.125 0 0 1 .26-1.431l1.004-.827c.292-.24.437-.613.43-.991a6.932 6.932 0 0 1 0-.255c.007-.38-.138-.751-.43-.992l-1.004-.827a1.125 1.125 0 0 1-.26-1.43l1.297-2.247a1.125 1.125 0 0 1 1.37-.491l1.216.456c.356.133.751.072 1.076-.124.072-.044.146-.086.22-.128.332-.183.582-.495.644-.869l.214-1.28Z"/><circle cx="12" cy="12" r="3"/></g></svg>
    <div class="navlbl" style="top:1404.7px">Workspace</div>
    <svg class="abs" style="left:52.4px;top:1454.5px" width="52.9" height="52.9" viewBox="0 0 24 24"><path d="M11.48 3.499a.562.562 0 0 1 1.04 0l2.125 5.111a.563.563 0 0 0 .475.345l5.518.442c.499.04.701.663.321.988l-4.204 3.602a.563.563 0 0 0-.182.557l1.285 5.385a.562.562 0 0 1-.84.61l-4.725-2.885a.562.562 0 0 0-.586 0L6.982 20.54a.562.562 0 0 1-.84-.61l1.285-5.386a.562.562 0 0 0-.182-.557l-4.204-3.602a.562.562 0 0 1 .321-.988l5.518-.442a.563.563 0 0 0 .475-.345L11.48 3.5Z" fill="none" stroke="#8f8f8f" stroke-width="1.5" stroke-linecap="round" stroke-linejoin="round"/></svg>
    <div class="navlbl" style="top:1516.2px">Upgrade</div>
  </div>

  <div id="frame"></div>
</div>
</body></html>
